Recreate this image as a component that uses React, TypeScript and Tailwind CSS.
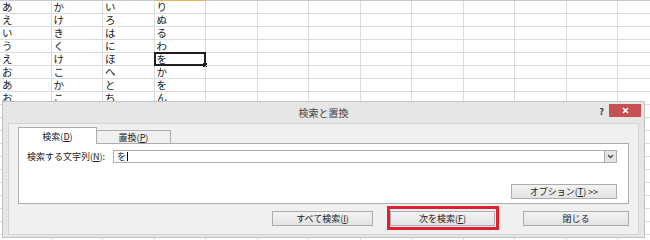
import React from "react";

const data: string[][] = [
  ["あ", "か", "い", "り"],
  ["え", "け", "ろ", "ぬ"],
  ["い", "き", "は", "る"],
  ["う", "く", "に", "わ"],
  ["え", "け", "ほ", "を"],
  ["お", "こ", "へ", "か"],
  ["あ", "か", "と", "を"],
  ["お", "こ", "ち", "ん"],
];

const font = { fontFamily: '"Noto Sans CJK JP", "Noto Sans", sans-serif' };

function Btn({ children, className = "" }: { children: React.ReactNode; className?: string }) {
  return (
    <div
      className={
        "flex h-[15px] items-center justify-center border border-[#acacac] bg-gradient-to-b from-[#f3f3f3] to-[#e3e3e3] text-[9px] leading-[11px] text-[#222] " +
        className
      }
    >
      <span className="block leading-[11px]">{children}</span>
    </div>
  );
}

export default function App() {
  const cells: { text: string; r: number; c: number }[] = [];
  for (let r = 0; r < 19; r++) {
    for (let c = 0; c < 13; c++) {
      cells.push({ text: (data[r] && data[r][c]) || "", r, c });
    }
  }
  return (
    <div className="relative h-[240px] w-[650px] overflow-hidden bg-white" style={font}>
      {/* spreadsheet */}
      <div className="grid grid-cols-[repeat(13,51.5px)]">
        {Array.from({ length: 13 }, (_, c) => (
          <div key={"h" + c} className={c === 3 ? "h-[1px] bg-[#e8b35a]" : "h-[1px] bg-[#c6cbd1]"} />
        ))}
        {cells.map(({ text, r, c }) => (
          <div
            key={r + "-" + c}
            className="relative flex h-[13px] items-center border-b border-r border-[#dadcdd] pl-[2px] text-[10.5px] leading-[12px] text-[#222]"
          >
            {text && <span className="block h-[12px] overflow-visible whitespace-nowrap leading-[12px]">{text}</span>}
            {r === 4 && c === 3 && (
              <div className="absolute -left-[1px] -top-[1px] h-[14px] w-[52px] border-2 border-[#1f1f1f]">
                <div className="absolute -bottom-[3px] -right-[3px] h-[4px] w-[4px] bg-[#1f1f1f]" />
              </div>
            )}
          </div>
        ))}
      </div>

      {/* dialog */}
      <div className="absolute left-[2px] top-[101px] flex h-[137px] w-[643px] flex-col border border-[#c2c2c2] bg-[#e6e6e6]">
        <div className="relative flex h-[21px] shrink-0 items-center justify-center">
          <span className="block text-[10px] leading-[12px] text-[#444]">検索と置換</span>
          <span className="absolute right-[40px] top-[5px] block text-[9px] font-bold leading-[10px] text-[#333]">?</span>
          <div className="absolute right-[3px] top-[2px] flex h-[13px] w-[32px] items-center justify-center bg-[#c75050]">
            <svg width="7" height="7" viewBox="0 0 7 7">
              <path d="M1 1L6 6M6 1L1 6" stroke="white" strokeWidth="1.6" />
            </svg>
          </div>
        </div>
        <div className="mx-[5px] mb-[2px] flex flex-1 flex-col border border-[#d4d4d4] bg-[#f0f0f0] pl-[9px] pr-[9px] pt-[3px]">
          {/* tabs */}
          <div className="flex h-[16px] items-end">
            <div className="relative z-10 -mb-[1px] flex h-[17px] w-[79px] items-center justify-center border border-b-0 border-[#adadad] bg-white text-[9px] leading-[11px] text-[#222]">
              <span className="block leading-[11px]">
                検索(<span className="underline">D</span>)
              </span>
            </div>
            <div className="flex h-[13px] w-[74px] items-center justify-center border border-l-0 border-b-0 border-[#adadad] bg-[#f0f0f0] text-[9px] leading-[11px] text-[#222]">
              <span className="block leading-[11px]">
                置換(<span className="underline">P</span>)
              </span>
            </div>
          </div>
          {/* panel */}
          <div className="flex h-[61px] flex-col border border-[#adadad] bg-white pl-[8px] pr-[11px] pt-[6px]">
            <div className="flex h-[13px] items-center">
              <span className="block w-[86px] text-[9px] leading-[11px] text-[#222]">
                検索する文字列(<span className="underline">N</span>):
              </span>
              <div className="flex h-[13px] flex-1 items-center border border-[#abadb3] bg-white pl-[3px]">
                <span className="block text-[9px] leading-[11px] text-[#222]">を</span>
                <span className="ml-[1px] h-[9px] w-[1px] bg-black" />
                <div className="ml-auto flex h-[11px] w-[12px] items-center justify-center border-l border-[#acacac] bg-[#e5e5e5]">
                  <svg width="7" height="5" viewBox="0 0 7 5">
                    <path d="M1 1L3.5 3.5L6 1" stroke="#444" strokeWidth="1.3" fill="none" />
                  </svg>
                </div>
              </div>
            </div>
            <div className="mt-[21px] flex justify-end">
              <Btn className="h-[14px] w-[106px]">
                オプション(<span className="underline">T</span>) &gt;&gt;
              </Btn>
            </div>
          </div>
          {/* bottom buttons */}
          <div className="mt-[7px] flex pl-[254px]">
            <Btn className="w-[102px]">
              すべて検索(<span className="underline">I</span>)
            </Btn>
            <div className="relative ml-[17px]">
              <Btn className="w-[105px] border-[#7eb4ea] from-[#ecf4fc] to-[#dcecfc]">
                次を検索(<span className="underline">F</span>)
              </Btn>
              <div className="absolute -bottom-[4px] -left-[3px] -right-[4px] -top-[5px] border-[3px] border-[#e0202e]" />
            </div>
            <Btn className="ml-[28px] w-[107px]">閉じる</Btn>
          </div>
        </div>
      </div>
    </div>
  );
}
